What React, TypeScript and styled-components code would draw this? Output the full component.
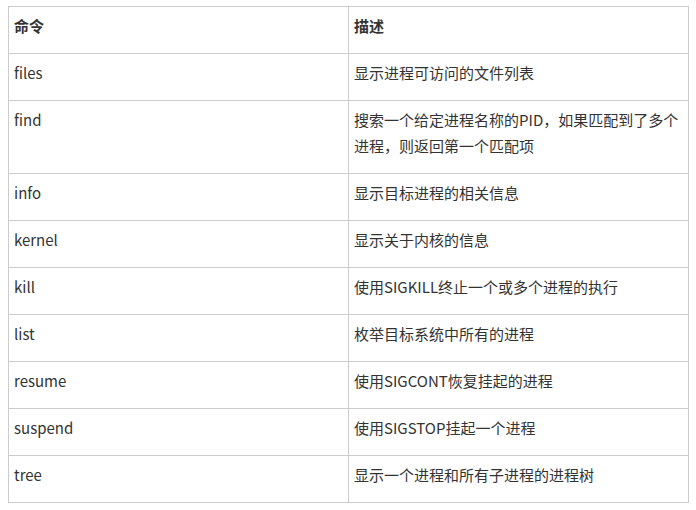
import React from "react";
import styled, { createGlobalStyle } from "styled-components";

const GlobalStyle = createGlobalStyle`
  html, body {
    margin: 0;
    padding: 0;
    background: #fff;
  }
  body {
    font-family: "Noto Sans CJK SC", "Noto Sans", sans-serif;
  }
`;

const Page = styled.div`
  padding: 6px 8px 0 8px;
  width: 680px;
`;

const Table = styled.table`
  width: 680px;
  border-collapse: collapse;
  table-layout: fixed;
  font-size: 15px;
  color: #333;
`;

const HeadCell = styled.th`
  border: 1px solid #ccc;
  padding: 6px 5px 14px;
  line-height: 26px;
  text-align: left;
  vertical-align: top;
  font-weight: bold;
`;

const Cell = styled.td`
  border: 1px solid #ccc;
  padding: 6px 5px 14px;
  line-height: 26px;
  text-align: left;
  vertical-align: top;
  word-break: break-all;
`;

const rows: [string, string][] = [
  ["files", "显示进程可访问的文件列表"],
  ["find", "搜索一个给定进程名称的PID，如果匹配到了多个进程，则返回第一个匹配项"],
  ["info", "显示目标进程的相关信息"],
  ["kernel", "显示关于内核的信息"],
  ["kill", "使用SIGKILL终止一个或多个进程的执行"],
  ["list", "枚举目标系统中所有的进程"],
  ["resume", "使用SIGCONT恢复挂起的进程"],
  ["suspend", "使用SIGSTOP挂起一个进程"],
  ["tree", "显示一个进程和所有子进程的进程树"],
];

export default function App() {
  return (
    <Page>
      <GlobalStyle />
      <Table>
        <colgroup>
          <col style={{ width: 340 }} />
          <col style={{ width: 340 }} />
        </colgroup>
        <thead>
          <tr>
            <HeadCell>命令</HeadCell>
            <HeadCell>描述</HeadCell>
          </tr>
        </thead>
        <tbody>
          {rows.map(([cmd, desc]) => (
            <tr key={cmd}>
              <Cell>{cmd}</Cell>
              <Cell>{desc}</Cell>
            </tr>
          ))}
        </tbody>
      </Table>
    </Page>
  );
}
